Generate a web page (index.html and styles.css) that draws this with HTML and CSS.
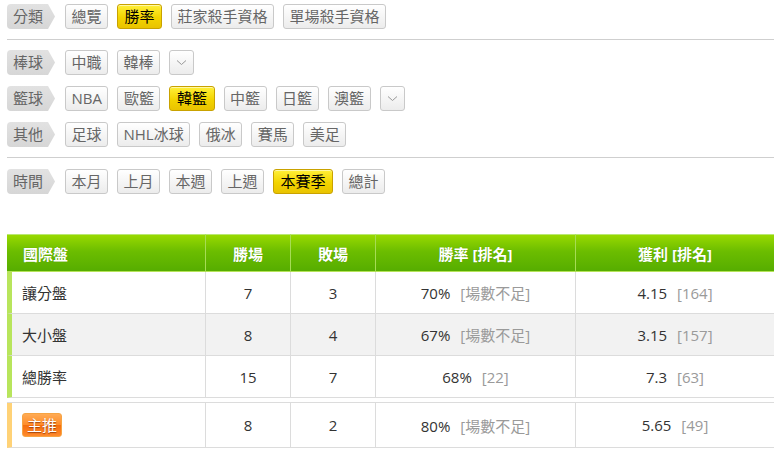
FILE: index.html
```html
<!DOCTYPE html>
<html lang="zh-Hant">
<head>
<meta charset="utf-8">
<title>勝率</title>
<link rel="stylesheet" href="styles.css">
</head>
<body>
<div class="page">
  <div class="filter-group first">
    <div class="filter-row">
      <span class="tag">分類</span>
      <a class="btn">總覽</a>
      <a class="btn active">勝率</a>
      <a class="btn">莊家殺手資格</a>
      <a class="btn">單場殺手資格</a>
    </div>
  </div>
  <div class="filter-group middle">
    <div class="filter-row">
      <span class="tag">棒球</span>
      <a class="btn">中職</a>
      <a class="btn">韓棒</a>
      <a class="btn more"><svg width="11" height="7" viewBox="0 0 11 7"><path d="M1 1.5l4.5 4 4.5-4" stroke="#999" stroke-width="1" fill="none"/></svg></a>
    </div>
    <div class="filter-row">
      <span class="tag">籃球</span>
      <a class="btn">NBA</a>
      <a class="btn">歐籃</a>
      <a class="btn active">韓籃</a>
      <a class="btn">中籃</a>
      <a class="btn">日籃</a>
      <a class="btn">澳籃</a>
      <a class="btn more"><svg width="11" height="7" viewBox="0 0 11 7"><path d="M1 1.5l4.5 4 4.5-4" stroke="#999" stroke-width="1" fill="none"/></svg></a>
    </div>
    <div class="filter-row">
      <span class="tag">其他</span>
      <a class="btn">足球</a>
      <a class="btn">NHL冰球</a>
      <a class="btn">俄冰</a>
      <a class="btn">賽馬</a>
      <a class="btn">美足</a>
    </div>
  </div>
  <div class="filter-group last">
    <div class="filter-row">
      <span class="tag">時間</span>
      <a class="btn">本月</a>
      <a class="btn">上月</a>
      <a class="btn">本週</a>
      <a class="btn">上週</a>
      <a class="btn active">本賽季</a>
      <a class="btn">總計</a>
    </div>
  </div>

  <table class="stats">
    <colgroup>
      <col class="c1"><col class="c2"><col class="c3"><col class="c4"><col class="c5">
    </colgroup>
    <thead>
      <tr>
        <th class="name">國際盤</th>
        <th>勝場</th>
        <th>敗場</th>
        <th>勝率 [排名]</th>
        <th class="end">獲利 [排名]</th>
      </tr>
    </thead>
    <tbody>
      <tr>
        <td class="name">讓分盤</td>
        <td>7</td>
        <td>3</td>
        <td>70%<span class="rank">[場數不足]</span></td>
        <td class="end">4.15<span class="rank">[164]</span></td>
      </tr>
      <tr class="alt">
        <td class="name">大小盤</td>
        <td>8</td>
        <td>4</td>
        <td>67%<span class="rank">[場數不足]</span></td>
        <td class="end">3.15<span class="rank">[157]</span></td>
      </tr>
      <tr>
        <td class="name">總勝率</td>
        <td>15</td>
        <td>7</td>
        <td>68%<span class="rank">[22]</span></td>
        <td class="end">7.3<span class="rank">[63]</span></td>
      </tr>
      <tr class="spacer"><td colspan="5"></td></tr>
      <tr class="main">
        <td class="name"><span class="badge">主推</span></td>
        <td>8</td>
        <td>2</td>
        <td>80%<span class="rank">[場數不足]</span></td>
        <td class="end">5.65<span class="rank">[49]</span></td>
      </tr>
    </tbody>
  </table>
</div>
</body>
</html>
```

FILE: styles.css
```css
html, body {
  margin: 0;
  padding: 0;
  background: #fff;
  overflow: hidden;
}
body {
  font-family: "Open Sans", "Noto Sans CJK TC", sans-serif;
  color: #333;
}
.page {
  padding-left: 7px;
}

.filter-group {
  border-bottom: 1px solid #cfcfcf;
  display: flex;
  flex-direction: column;
  gap: 11px;
}
.filter-group.first { padding: 4px 0 10px; }
.filter-group.middle { padding: 10px 0 10px; }
.filter-group.last { padding: 11px 0 0; border-bottom: 0; }

.filter-row {
  display: flex;
  align-items: center;
  gap: 9px;
  height: 25px;
}

.tag {
  box-sizing: border-box;
  width: 48px;
  height: 25px;
  line-height: 25px;
  padding-left: 6px;
  margin-right: 1px;
  font-size: 15px;
  color: #666;
  background: linear-gradient(#e2e2e2, #d6d6d6);
  border-radius: 4px 0 0 4px;
  clip-path: polygon(0 0, 41px 0, 48px 50%, 41px 100%, 0 100%);
}

.btn {
  box-sizing: border-box;
  height: 25px;
  line-height: 23px;
  padding: 0 5.5px;
  font-size: 15px;
  color: #666;
  border: 1px solid #c9c9c9;
  border-radius: 3px;
  background: linear-gradient(#ffffff, #ececec);
  text-decoration: none;
  white-space: nowrap;
}
.btn.active {
  padding: 0 6.5px;
  color: #000;
  border-color: #c9a200;
  background: linear-gradient(#fff03a, #f3d400 55%, #e9c300);
  box-shadow: inset 0 1px 0 rgba(255, 255, 255, 0.55);
}
.btn.more {
  width: 25px;
  padding: 0;
  display: flex;
  align-items: center;
  justify-content: center;
}

.stats {
  margin-top: 40px;
  width: 767px;
  table-layout: fixed;
  border-collapse: separate;
  border-spacing: 0;
  font-size: 15px;
}
.stats col.c1 { width: 199px; }
.stats col.c2 { width: 85px; }
.stats col.c3 { width: 85px; }
.stats col.c4 { width: 200px; }
.stats col.c5 { width: 198px; }

.stats th {
  box-sizing: border-box;
  height: 38px;
  padding: 0;
  color: #fff;
  font-weight: bold;
  font-size: 15px;
  text-align: center;
  background: linear-gradient(#98d900, #6cbd00 45%, #56ad00);
  border-top: 1px solid #b9e873;
  border-bottom: 1px solid #b5e35a;
  border-right: 1px solid #a6dc55;
  text-shadow: 0 0 1px rgba(40, 90, 0, 0.4);
}
.stats th.name {
  text-align: left;
  padding-left: 16px;
}
.stats th.end { border-right: 0; }

.stats td {
  box-sizing: border-box;
  height: 42px;
  padding: 0;
  text-align: center;
  color: #333;
  border-bottom: 1px solid #dcdcdc;
  border-right: 1px solid #dcdcdc;
}
.stats td.end { border-right: 0; }
.stats td.name {
  text-align: left;
  padding-left: 10px;
  border-left: 5px solid #b8e55c;
}
.stats tr.alt td { background: #f2f2f2; }

.stats tr.spacer td {
  height: 5px;
  border-right: 0;
  border-left: 0;
  border-bottom: 1px solid #dcdcdc;
  padding: 0;
}
.stats tr.main td { height: 45px; }
.stats tr.main td.name { border-left-color: #ffd277; }

.rank {
  color: #9a9a9a;
  margin-left: 10px;
}

.badge {
  display: inline-block;
  box-sizing: border-box;
  height: 24px;
  line-height: 22px;
  padding: 0 4px;
  font-size: 15px;
  color: #fff;
  border: 1px solid #f6a443;
  border-radius: 3px;
  background: linear-gradient(#ffab55, #ff8d2a 48%, #f56f0e 52%, #ff8a2c);
  text-shadow: 0 1px 1px rgba(120, 40, 0, 0.7);
  vertical-align: middle;
}
```
